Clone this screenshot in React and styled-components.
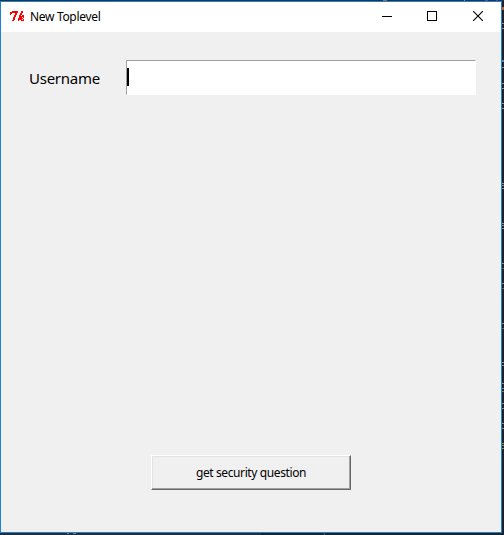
import React from "react";
import styled, { createGlobalStyle } from "styled-components";

const Global = createGlobalStyle`
  * { box-sizing: border-box; }
  body { margin: 0; background: #1b222b; overflow: hidden; }
`;

const Desktop = styled.div`
  position: relative;
  width: 504px;
  height: 535px;
  padding: 1px 2px 2px 0;
  background: linear-gradient(#2b303c 1px, transparent 1px),
    linear-gradient(to top, #2b2c31 2px, transparent 2px), #1b222b;
`;

const Backdrop = styled.svg`
  position: absolute;
  inset: 0;
`;

const Window = styled.main`
  position: relative;
  display: flex;
  flex-direction: column;
  width: 502px;
  height: 532px;
  border: 1px solid #1883d7;
  background: #f0f0f0;
  color: #000;
  font-family: "Noto Sans", "Open Sans", sans-serif;
`;

const TitleBar = styled.header`
  display: flex;
  align-items: center;
  height: 30px;
  padding-left: 8px;
  background: #fff;
`;

const Controls = styled.div`
  display: flex;
  gap: 35px;
  padding-right: 18px;
  height: 28px;
  align-self: flex-start;
`;

const Control = styled.button`
  display: flex;
  align-items: center;
  justify-content: center;
  width: ${(p) => p.$width}px;
  height: 28px;
  padding: 0;
  border: 0;
  background: none;
`;

const Caption = styled.h1`
  flex: 1;
  margin: 0 0 0 5px;
  font-size: 12px;
  font-weight: 400;
  line-height: 30px;
  letter-spacing: -0.32px;
`;

const Form = styled.form`
  flex: 1;
  display: flex;
  flex-direction: column;
  justify-content: space-between;
  align-items: center;
  padding: 28px 25px 42px 28px;
`;

const Field = styled.label`
  display: flex;
  align-items: center;
  width: 100%;
`;

const FieldName = styled.span`
  width: 97px;
  height: 35px;
  padding-top: 1px;
  font-size: 15px;
  line-height: 35px;
  letter-spacing: -0.25px;
`;

const Entry = styled.span`
  display: flex;
  align-items: flex-start;
  width: 350px;
  height: 35px;
  padding-top: 7px;
  border: 1px solid;
  border-color: #a0a0a0 #fff #fff #a0a0a0;
  background: #fff;
`;

const Caret = styled.i`
  width: 2px;
  height: 18px;
  background: #000;
`;

const PushButton = styled.button`
  width: 200px;
  height: 35px;
  margin-right: 3px;
  padding: 0;
  border: 1px solid;
  border-color: #fff #696969 #696969 #fff;
  box-shadow: inset -1px -1px #a0a0a0, inset 1px 1px #e3e3e3;
  background: #f0f0f0;
  color: #000;
  font: 12px "Noto Sans", "Open Sans", sans-serif;
  letter-spacing: -0.39px;
`;

const TkIcon = () => (
  <svg width="16" height="16" viewBox="0 0 16 16" fill="none" stroke="#f00" shapeRendering="crispEdges">
    <path d="M3 2.5H9M1 3.5H9M1 4.5H3M6 4.5H8M1 5.5H2M6 5.5H8M5 6.5H7M5 7.5H7M4 8.5H6M4 9.5H6M4 10.5H6M3 11.5H5" />
    <path d="M12 2.5H14M12 3.5H14M11 4.5H13M11 5.5H13M10 6.5H12M13 6.5H15M10 7.5H12M12 7.5H15M10 8.5H13M14 8.5H15M9 9.5H14M9 10.5H11M11 10.5H13M14 10.5H15M9 11.5H10M12 11.5H15" />
  </svg>
);

const edgeMarks = [
  [23, "#858e99"], [28, "#858e99"],
  [60, "#5583b4"], [61, "#587fa4"], [67, "#8e98a5"], [83, "#8e98a5"], [88, "#8e98a5"], [103, "#8e98a5"], [108, "#8e98a5"],
  [183, "#858e99"], [185, "#858e99"], [188, "#858e99"],
  [223, "#858e99"], [225, "#858e99"], [228, "#858e99"],
  [263, "#858e99"], [268, "#5d6754"], [283, "#858e99"], [288, "#706b53"],
  [323, "#858e99"], [328, "#706b53"], [362, "#858e99"], [365, "#858e99"],
  [383, "#858e99"], [388, "#6688bb"], [391, "#6c8050"],
  [403, "#858e99"], [408, "#858e99"], [423, "#858e99"], [428, "#858e99"],
  [443, "#829657"], [445, "#829657"], [448, "#829657"],
];

export default function App() {
  return (
    <>
      <Global />
      <Desktop>
        <Backdrop width="504" height="535" shapeRendering="crispEdges" aria-hidden="true">
          {edgeMarks.map(([y, color]) => (
            <rect key={y} x="502" y={y} width="2" height="1" fill={color} />
          ))}
          <rect x="502" y="7" width="2" height="3" fill="#b7602b" />
          <rect x="383" width="4" height="1" fill="#b7602b" />
          <rect x="464" width="1" height="1" fill="#858e99" />
          <rect x="485" width="3" height="1" fill="#72408c" />
          <rect x="496" width="2" height="1" fill="#72408c" />
          <rect x="67" y="533" width="2" height="1" fill="#85807c" />
          <rect x="73" y="533" width="3" height="1" fill="#85807c" />
          <rect x="261" y="533" width="243" height="2" fill="#202326" />
          <rect x="324" y="533" width="1" height="2" fill="#505458" />
        </Backdrop>
        <Window>
          <TitleBar>
            <TkIcon />
            <Caption>New Toplevel</Caption>
            <Controls>
              <Control $width={10} aria-label="Minimize" type="button">
                <svg width="10" height="11"><path d="M0 5.5H10" stroke="#000" /></svg>
              </Control>
              <Control $width={10} aria-label="Maximize" type="button">
                <svg width="10" height="10"><rect x=".5" y=".5" width="9" height="9" fill="none" stroke="#000" /></svg>
              </Control>
              <Control $width={11} aria-label="Close" type="button">
                <svg width="10" height="10"><path d="M0 0L10 10M10 0L0 10" stroke="#000" strokeWidth="1.1" /></svg>
              </Control>
            </Controls>
          </TitleBar>
          <Form>
            <Field>
              <FieldName>Username</FieldName>
              <Entry><Caret /></Entry>
            </Field>
            <PushButton type="button">get security question</PushButton>
          </Form>
        </Window>
      </Desktop>
    </>
  );
}
